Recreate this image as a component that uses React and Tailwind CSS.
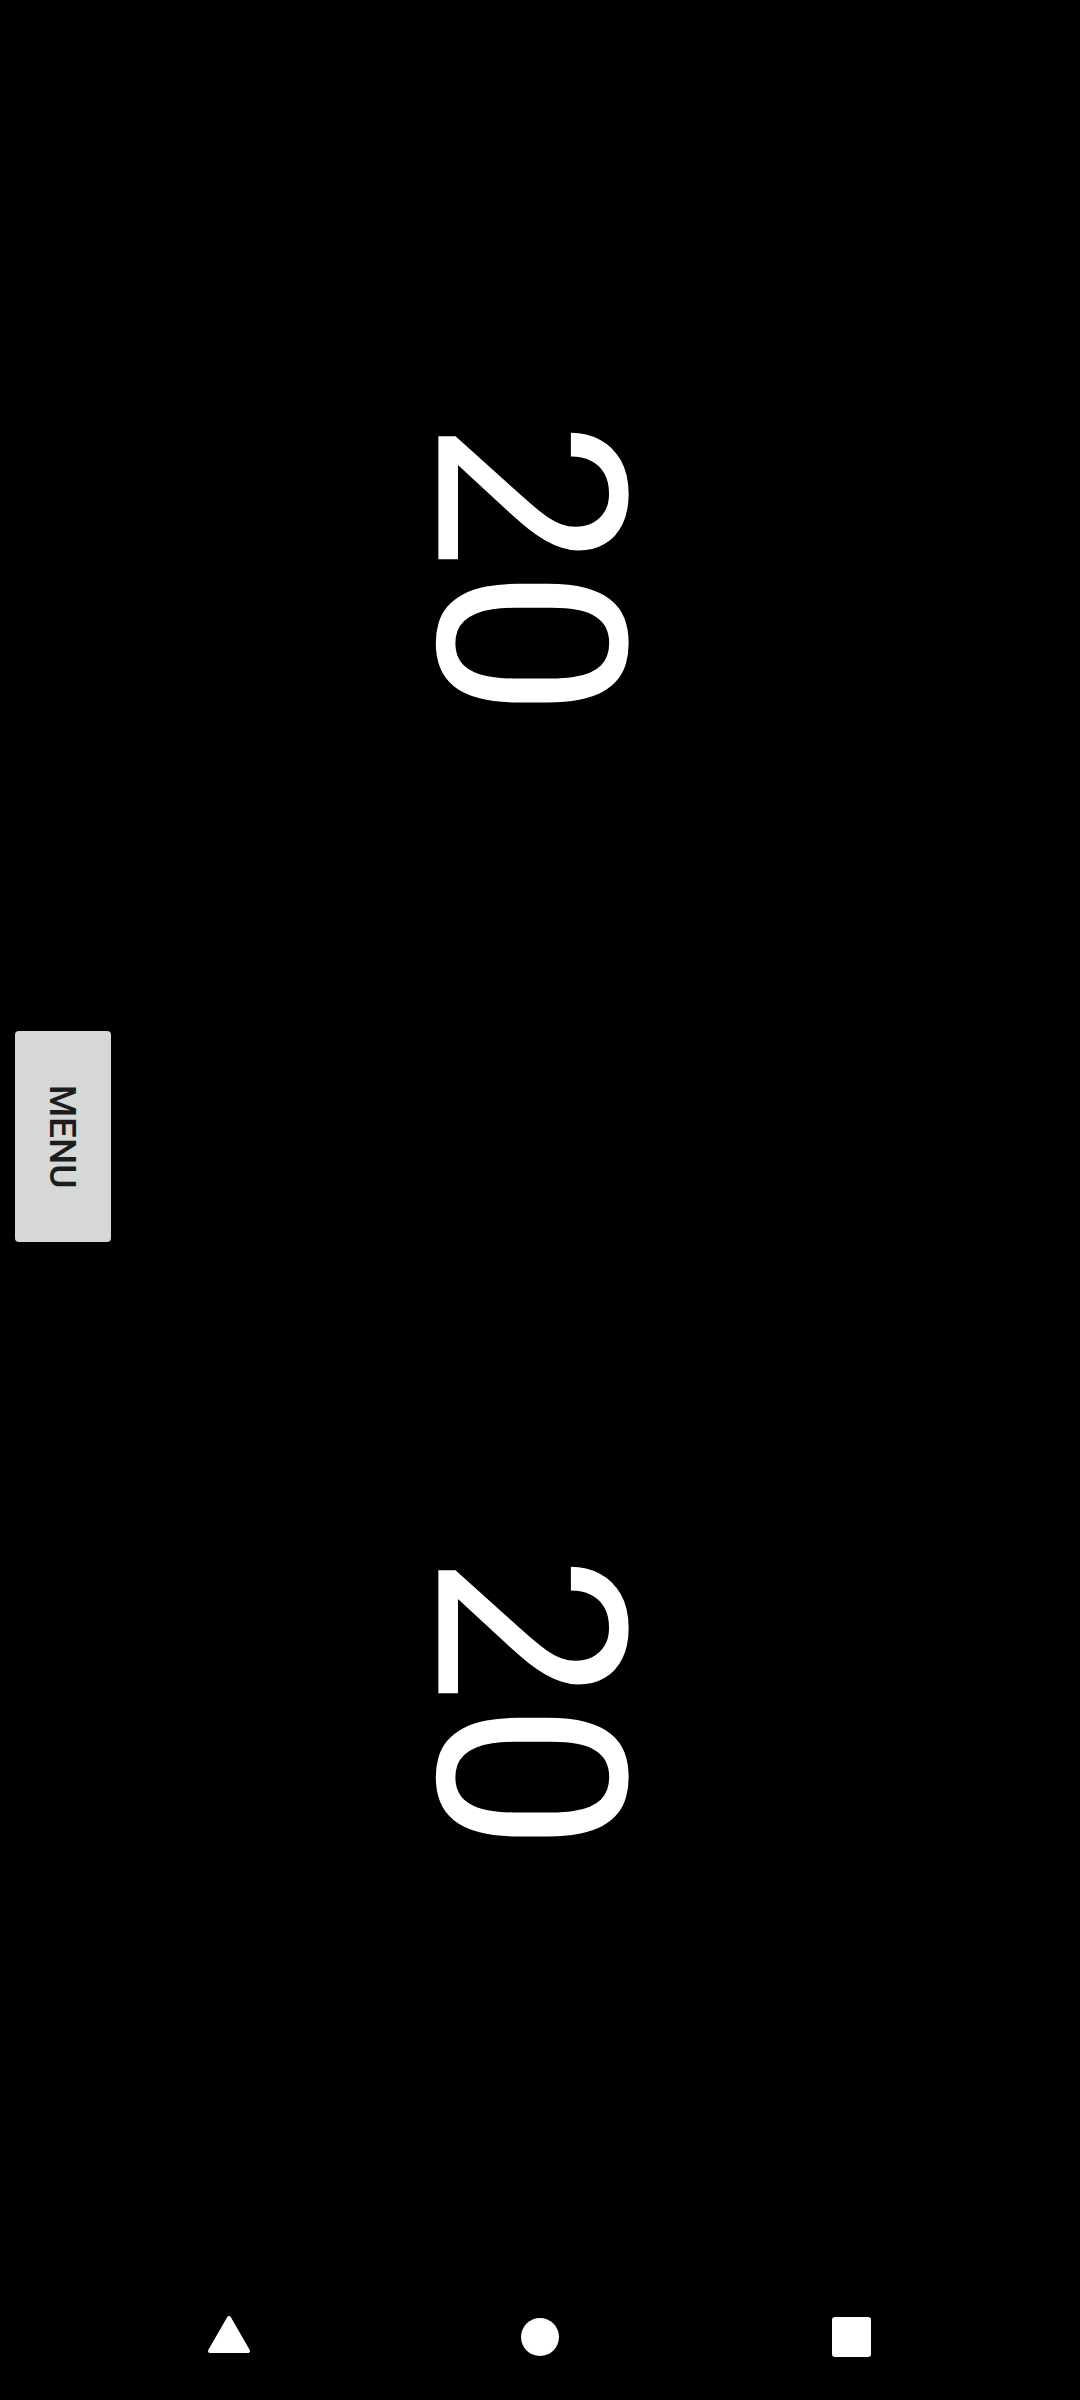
import React from "react";

function Count() {
  return (
    <div className="flex-1 flex items-center justify-center">
      <div
        className="rotate-90 translate-x-[-12px] translate-y-[2px] text-white leading-none font-normal text-[264px]"
        style={{ fontFamily: "Roboto, 'Liberation Sans', sans-serif" }}
      >
        20
      </div>
    </div>
  );
}

export default function App() {
  return (
    <div className="w-[1080px] h-[2400px] bg-black flex flex-col overflow-hidden">
      <div className="relative h-[2268px] flex flex-col">
        <Count />
        <Count />
        <div className="absolute left-[15px] top-[1031px] w-[96px] h-[211px] rounded-[4px] bg-[#d6d7d7] flex items-center justify-center shadow-[0_2px_3px_rgba(0,0,0,0.4)]">
          <span
            className="rotate-90 whitespace-nowrap text-[#1c1c1c] font-medium text-[37px] tracking-normal leading-none"
            style={{ fontFamily: "Roboto, 'Liberation Sans', sans-serif" }}
          >
            MENU
          </span>
        </div>
      </div>
      <div className="h-[132px] pt-[5px] flex items-center justify-center">
        <div className="w-[311px] flex items-center justify-center -translate-y-[2px]">
          <svg width="44" height="40" viewBox="0 0 44 40">
            <path
              d="M22 3 L41 36 L3 36 Z"
              fill="white"
              stroke="white"
              strokeWidth="4"
              strokeLinejoin="round"
            />
          </svg>
        </div>
        <div className="w-[311px] flex items-center justify-center">
          <div className="w-[38px] h-[38px] rounded-full bg-white" />
        </div>
        <div className="w-[311px] flex items-center justify-center">
          <div className="w-[39px] h-[40px] rounded-[3px] bg-white" />
        </div>
      </div>
    </div>
  );
}
